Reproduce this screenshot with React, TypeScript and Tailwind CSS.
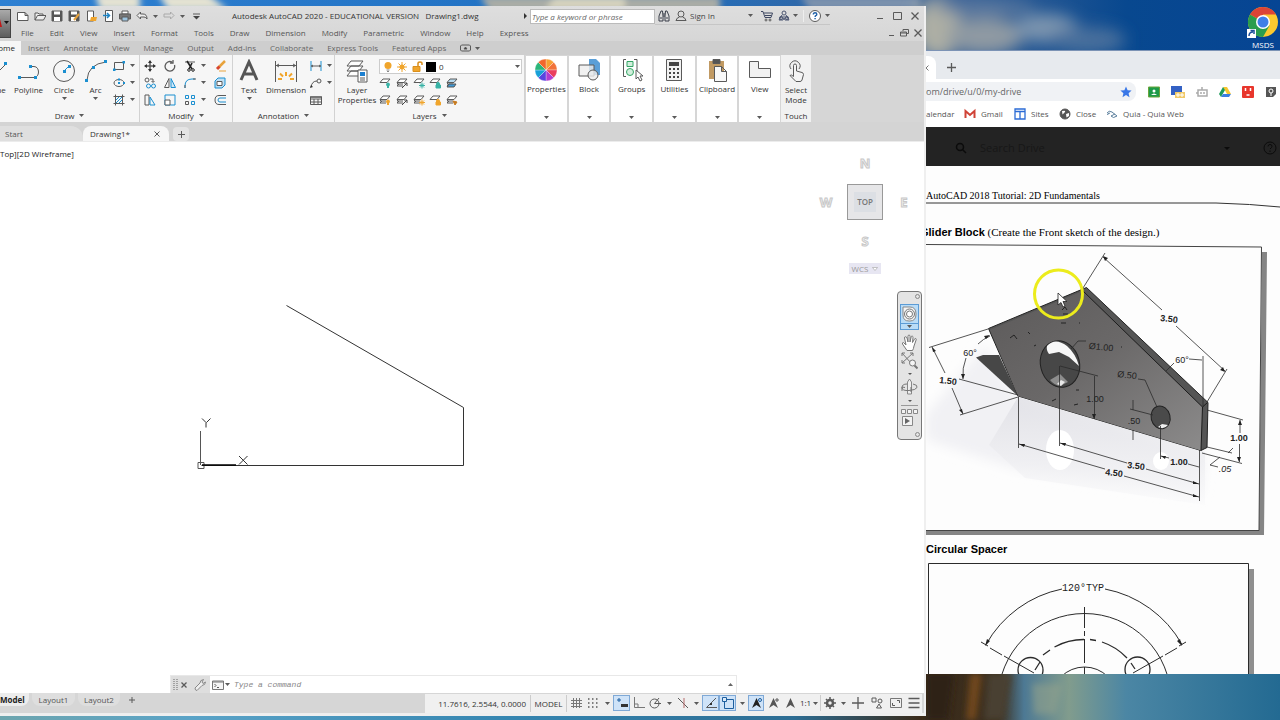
import type { ReactNode } from "react";

type IconProps = { w?: number; h?: number; children: ReactNode; className?: string };

function Icon({ w = 12, h = 12, children, className = "" }: IconProps) {
  return (
    <svg
      width={w}
      height={h}
      viewBox={`0 0 ${w} ${h}`}
      fill="none"
      stroke="#5a5a5a"
      strokeWidth="1"
      aria-hidden="true"
      className={`shrink-0 ${className}`}
    >
      {children}
    </svg>
  );
}

function Caret({ className = "" }: { className?: string }) {
  return (
    <svg width="5" height="3" viewBox="0 0 5 3" aria-hidden="true" className={`shrink-0 ${className}`}>
      <path d="M0 0h5L2.500 3z" fill="#5a5a5a" />
    </svg>
  );
}

const menus = ["File", "Edit", "View", "Insert", "Format", "Tools", "Draw", "Dimension", "Modify", "Parametric", "Window", "Help", "Express"];
const ribbonTabs = ["Insert", "Annotate", "View", "Manage", "Output", "Add-ins", "Collaborate", "Express Tools", "Featured Apps"];

function Wallpaper() {
  return (
    <svg className="absolute inset-0 h-full w-full" viewBox="0 0 1280 720" preserveAspectRatio="none" aria-hidden="true">
      <defs>
        <linearGradient id="sky" x1="0" x2="1" y1="0" y2="0">
          <stop offset="0" stopColor="#2e80d2" />
          <stop offset="0.5" stopColor="#1f6fc0" />
          <stop offset="0.74" stopColor="#3d6396" />
          <stop offset="0.88" stopColor="#08488f" />
          <stop offset="1" stopColor="#064594" />
        </linearGradient>
        <linearGradient id="sea" x1="0" x2="1" y1="0" y2="0">
          <stop offset="0" stopColor="#6da5ae" />
          <stop offset="0.15" stopColor="#5aa3c7" />
          <stop offset="0.4" stopColor="#3585b0" />
          <stop offset="0.62" stopColor="#2d6d93" />
          <stop offset="0.72" stopColor="#3a2a19" />
          <stop offset="0.78" stopColor="#3b2f1f" />
          <stop offset="0.8" stopColor="#4d7994" />
          <stop offset="0.835" stopColor="#819c8d" />
          <stop offset="0.88" stopColor="#4b86a4" />
          <stop offset="1" stopColor="#236a92" />
        </linearGradient>
        <filter id="soft" x="-20%" y="-50%" width="140%" height="200%">
          <feGaussianBlur stdDeviation="8" />
        </filter>
        <filter id="soft2" x="-20%" y="-50%" width="140%" height="200%">
          <feGaussianBlur stdDeviation="3" />
        </filter>
      </defs>
      <rect width="1280" height="360" fill="url(#sky)" />
      <g filter="url(#soft2)">
        <path d="M95 -6h45v16h-40zM158 -6h50l20 16h-60z" fill="#e4e2d2" />
        <path d="M480 -4h240v16H490z" fill="#a9aca6" />
        <path d="M555 -4h70v14h-80z" fill="#d5d2bd" />
        <path d="M800 -4h120v14h-110z" fill="#7c92ad" />
      </g>
      <g filter="url(#soft)">
        <ellipse cx="938" cy="28" rx="24" ry="30" fill="#adafa4" />
        <ellipse cx="985" cy="36" rx="38" ry="18" fill="#8f9aa3" />
        <ellipse cx="985" cy="8" rx="50" ry="7" fill="#5e7ba0" />
        <ellipse cx="1046" cy="28" rx="32" ry="14" fill="#7c94af" />
        <ellipse cx="1088" cy="40" rx="38" ry="13" fill="#4a6f9c" />
      </g>
      <rect y="660" width="1280" height="60" fill="url(#sea)" />
      <g filter="url(#soft2)">
        <path d="M926 674h28l-6 46h-22z" fill="#2e2215" />
        <path d="M970 674h12l-6 46h-10z" fill="#6f461d" />
        <path d="M988 674h24l-8 46h-20z" fill="#4a3f30" />
        <path d="M1032 684h30l-6 30h-22z" fill="#98a68b" opacity=".5" />
      </g>
    </svg>
  );
}

function QuickAccess() {
  return (
    <div className="flex items-center gap-[5px] pl-[6px]">
      <button aria-label="New"><Icon><path d="M.5 2.500h7.500l3 3v5H.5zM8 2.500v3h3" fill="#fff" /></Icon></button>
      <button aria-label="Open"><Icon><path d="M1 10V3h3l1 1h4v2M1 10l2.500-4.500H12L9.500 10z" fill="#eee" /></Icon></button>
      <button aria-label="Save"><Icon><path d="M1 1h10v10H1z" fill="#555" /><path d="M3 1.500h6v3H3zM3 7h6v4H3z" fill="#fff" stroke="none" /></Icon></button>
      <button aria-label="Save As"><Icon><path d="M1 1h10v10H1z" fill="#555" /><path d="M3 1.500h6v3H3zM3 7h5v4H3z" fill="#fff" stroke="none" /><path d="M6 10l5-6" stroke="#e8a33d" strokeWidth="2" /></Icon></button>
      <button aria-label="Open from web"><Icon><path d="M2.500 1h6v10h-6z" fill="#fff" /><path d="M6 7h6l-1 4H5z" fill="#f0a52c" stroke="none" /></Icon></button>
      <button aria-label="Save to mobile"><Icon><path d="M3.500.5h7v11h-7z" fill="#fff" /><path d="M1 5.500h6M5 3l2.500 2.500L5 8" stroke="#1d83c4" strokeWidth="1.500" /></Icon></button>
      <button aria-label="Plot"><Icon><path d="M3 1h6v3H3z" fill="#fff" /><path d="M.5 4h11v5H.5z" fill="#777" /><path d="M3 7h6v4H3z" fill="#9cc4e0" /></Icon></button>
      <button aria-label="Undo"><Icon><path d="M4.500 2L1 5.500 4.500 9V7H8q2 0 3 2 0-5-4-5H4.500z" fill="#eee" /></Icon></button>
      <Caret />
      <button aria-label="Redo"><Icon><path d="M7.500 2L11 5.500 7.500 9V7H1V4h6.500z" stroke="#aaa" /></Icon></button>
      <Caret />
      <button aria-label="Customize toolbar" className="pl-[3px]"><Icon w={7} h={7}><path d="M0 1h7" /><path d="M0 3h7L3.500 6.500z" fill="#444" stroke="none" /></Icon></button>
    </div>
  );
}

function TitleBar() {
  return (
    <header className="flex h-[35px] bg-gradient-to-b from-[#dedede] to-[#d6d6d6]">
      <button aria-label="Application menu" className="mt-[3px] flex h-[29px] w-[11px] items-center justify-end border border-l-0 border-[#444] bg-gradient-to-b from-[#aaa] to-[#5d5d5d]">
        <svg width="10" height="20" viewBox="0 0 10 20" aria-hidden="true">
          <path d="M0 5l2 8H0z" fill="#c01818" />
          <path d="M4 7h5L6.500 10z" fill="#111" />
        </svg>
      </button>
      <div className="flex min-w-0 flex-1 flex-col">
        <div className="flex h-[20px] items-center whitespace-nowrap">
          <div className="w-[221px] shrink-0"><QuickAccess /></div>
          <h1 className="w-[292px] shrink-0 whitespace-pre text-[8px] text-[#333]">Autodesk AutoCAD 2020 - EDUCATIONAL VERSION   Drawing1.dwg</h1>
          <svg width="4" height="6" viewBox="0 0 4 6" aria-hidden="true"><path d="M0 0l3 3-3 3z" fill="#333" /></svg>
          <input aria-label="Keyword search" placeholder="Type a keyword or phrase" className="ml-[2px] h-[15px] w-[125px] border border-[#bbb] bg-white px-[1px] text-[8px] italic placeholder:text-[#666]" />
          <div className="flex h-[18px] items-center border-b border-[#c6c6c6]">
            <Icon className="ml-[3px]"><path d="M1 6l2-5h1.500L5 6v5H1zM11 6L9 1H7.500L7 6v5h4zM5 4h2M5 6h2M2 8h2M8 8h2" stroke="#3a3f4a" /></Icon>
            <button className="ml-[5px] flex items-center gap-[3px] text-[8px] text-[#444]">
              <Icon><circle cx="6" cy="4" r="3" /><path d="M1 11q0-3 3.500-4M11 11q0-3-3.500-4M1 10.500h10" /></Icon>
              Sign In
            </button>
            <Caret className="ml-[33px]" />
            <Icon className="ml-2"><path d="M0 1.500h2l2 6h6l1.500-4.500H3" stroke="#3d4660" /><path d="M4 5.500h6" stroke="#3d4660" /><circle cx="5" cy="10" r="1" /><circle cx="9" cy="10" r="1" /></Icon>
            <Icon className="ml-[5px]"><g stroke="#4a5470"><circle cx="6" cy="3" r="2" /><path d="M4 5L1 10h4l1-2 1 2h4L8 5M3 7h6" /><circle cx="3" cy="8" r="1.500" /><circle cx="9" cy="8" r="1.500" /></g></Icon>
            <Caret className="ml-[3px]" />
            <span className="mx-[5px] h-3 w-px bg-[#eee]" />
            <button aria-label="Help">
              <Icon>
                <circle cx="6" cy="6" r="5.500" fill="#fff" />
                <path d="M4.300 4.600q0-1.800 1.800-1.800 1.700 0 1.700 1.500 0 .9-1 1.400-.7.400-.7 1.200M6.100 8v1.300" stroke="#1d5fa8" strokeWidth="1.400" />
              </Icon>
            </button>
            <Caret className="ml-1" />
          </div>
          <div className="ml-auto flex items-center gap-[9px] pr-[5px]">
            <button aria-label="Minimize"><Icon w={8} h={8}><path d="M1 6.500h6" /></Icon></button>
            <button aria-label="Maximize"><Icon w={9} h={8}><path d="M.5.5h8v7h-8z" /></Icon></button>
            <button aria-label="Close"><Icon w={8} h={8}><path d="M.5.5l7 7M7.500.5l-7 7" strokeWidth="1.300" /></Icon></button>
          </div>
        </div>
        <div className="flex h-[14px] items-center">
          <nav className="flex gap-4 pl-[10px] text-[8px] text-[#555]">
            {menus.map((m) => (
              <button key={m}>{m}</button>
            ))}
          </nav>
          <div className="ml-auto flex items-center gap-[5px] pr-[2px]">
            <button aria-label="Minimize drawing"><Icon w={6} h={8}><path d="M0 6.500h5" /></Icon></button>
            <button aria-label="Restore drawing"><Icon w={9} h={8}><path d="M3 2V.5h5.500v4H7M.5 3h6v4h-6zM.5 4h6" /></Icon></button>
            <button aria-label="Close drawing"><Icon w={8} h={8}><path d="M.5.5l7 7M7.500.5l-7 7" strokeWidth="1.300" /></Icon></button>
          </div>
        </div>
      </div>
    </header>
  );
}

function Panel({ title, width, caret = true, children }: { title: string; width: string; caret?: boolean; children: ReactNode }) {
  return (
    <section className={`flex shrink-0 flex-col border-r border-[#d2d2d2] bg-[#f6f6f6] ${width}`}>
      <div className="flex h-[54px] pt-[2px]">{children}</div>
      <button className="flex h-[13px] items-center justify-center gap-[5px] text-[8px] leading-[13px] text-[#333]">
        {title}
        {caret && <Caret />}
      </button>
    </section>
  );
}

function BigTool({ label, width, caret, children }: { label: string; width: string; caret?: boolean; children: ReactNode }) {
  return (
    <button className={`flex shrink-0 flex-col items-center text-[8px] leading-[10px] text-[#333] ${width}`}>
      <span className="flex h-[28px] items-center">{children}</span>
      <span className="whitespace-pre text-center">{label}</span>
      {caret && <Caret className="mt-[2px]" />}
    </button>
  );
}

function SmallTool({ label, children, caret }: { label: string; children: ReactNode; caret?: boolean }) {
  return (
    <button aria-label={label} className="flex h-[17px] items-center gap-[5px]">
      <Icon>{children}</Icon>
      {caret && <Caret />}
    </button>
  );
}

const blue = "#1b8fd0";

function DrawPanel() {
  return (
    <Panel title="Draw" width="w-[140px]">
      <div className="flex w-[9px] justify-end overflow-hidden">
        <BigTool label="Line" width="w-[22px]">
          <Icon w={22} h={24}><path d="M1 23L19 5" /><path d="M17 3h3v3h-3z" fill={blue} stroke="none" /></Icon>
        </BigTool>
      </div>
      <BigTool label="Polyline" width="w-[39px]">
        <Icon w={24} h={24}>
          <path d="M2 18.500h15c6 0 6-11 0-11h-3" /><path d="M1 17h3v3H1zM12 6h3v3h-3zM17 17h3v3h-3z" fill={blue} stroke="none" />
        </Icon>
      </BigTool>
      <BigTool label="Circle" width="w-[32px]" caret>
        <Icon w={24} h={24}>
          <circle cx="12" cy="12" r="10.500" /><path d="M12 12l5-5" stroke={blue} /><path d="M11 11h3v3h-3zM16 6h3v3h-3z" fill={blue} stroke="none" />
        </Icon>
      </BigTool>
      <BigTool label="Arc" width="w-[31px]" caret>
        <Icon w={24} h={24}>
          <path d="M3 21Q4 5 22 3" /><path d="M1 20h3v3H1zM8 7h3v3H8zM20 1h3v3h-3z" fill={blue} stroke="none" />
        </Icon>
      </BigTool>
      <div className="flex flex-col pl-[2px]">
        <SmallTool label="Rectangle" caret><path d="M1.500 2.500h9v7h-9z" /><path d="M0 8.500h2.500V11H0zM9.500 1H12v2.500H9.500z" fill={blue} stroke="none" /></SmallTool>
        <SmallTool label="Ellipse" caret><ellipse cx="6" cy="6" rx="5" ry="3.500" /><path d="M5 5h2v2H5zM5 1.500h2v2H5zM10 5h2v2h-2z" fill={blue} stroke="none" /></SmallTool>
        <SmallTool label="Hatch" caret><path d="M.5 2.500h11M.5 9.500h11M2.500.5v11M9.500.5v11" /><path d="M3 6l3-3M3 9l6-6M6 9l3-3" stroke={blue} /></SmallTool>
      </div>
    </Panel>
  );
}

function ModifyPanel() {
  return (
    <Panel title="Modify" width="w-[93px]">
      <div className="flex gap-2 pl-[4px]">
        <div>
          <SmallTool label="Move"><path d="M6 1v10M1 6h10" strokeWidth="1.500" /><path d="M4 3l2-3 2 3zM4 9l2 3 2-3zM3 4L0 6l3 2zM9 4l3 2-3 2z" fill="#333" stroke="none" /></SmallTool>
          <SmallTool label="Copy"><circle cx="3" cy="3" r="2" /><path d="M6 2h3v3M7.500 4L9 5.500 10.500 4" /><circle cx="4.500" cy="9" r="2" stroke={blue} /><circle cx="9.500" cy="9" r="2" stroke={blue} /></SmallTool>
          <SmallTool label="Stretch"><path d="M1 1h4v10H1z" /><path d="M6 3l5 8H6z" stroke={blue} /></SmallTool>
        </div>
        <div>
          <SmallTool label="Rotate"><path d="M8 2A4.800 4.800 0 1 0 10.500 5M9 0v3H6" strokeWidth="1.300" /></SmallTool>
          <SmallTool label="Mirror"><path d="M5 1.500V10.500H.5z" /><path d="M7 1.500v9h4.500z" stroke={blue} fill="#cfe7f7" /></SmallTool>
          <SmallTool label="Scale"><path d="M1 1h10v10H1z" stroke={blue} /><path d="M1 6h5v5H1z" fill="#fff" /></SmallTool>
        </div>
        <div>
          <SmallTool label="Trim" caret><path d="M1 2h10" /><path d="M3 1l5 8M8 3L5 9" strokeWidth="1.600" stroke="#222" /><circle cx="5" cy="10" r="1.300" stroke="#222" /><circle cx="9" cy="10" r="1.300" stroke="#222" /></SmallTool>
          <SmallTool label="Fillet" caret><path d="M1 11V9q0-7 7-7h3" stroke={blue} /><path d="M1 11V8M9 2h3" /></SmallTool>
          <SmallTool label="Array" caret><path d="M1.500 1.500h3v3h-3zM7.500 1.500h3v3h-3zM7.500 7.500h3v3h-3z" stroke={blue} /><path d="M1.500 7.500h3v3h-3z" /></SmallTool>
        </div>
        <div>
          <SmallTool label="Erase"><path d="M11 1L5 7" stroke="#e8a33d" strokeWidth="2.500" /><path d="M5.500 6.500L3 9" stroke="#d8452e" strokeWidth="3" /><path d="M5 11h7" stroke="#e8a33d" /></SmallTool>
          <SmallTool label="Explode"><path d="M1 4l3-3h7v7l-3 3H1z" fill="#bfe0f5" stroke={blue} /><path d="M3 4.500h5v4H3z" fill="#fff" /></SmallTool>
          <SmallTool label="Offset"><path d="M12 1.500H5q-4 0-4 4.500t4 4.500h7" /><path d="M12 4H6q-2 0-2 2t2 2h6" stroke={blue} /></SmallTool>
        </div>
      </div>
    </Panel>
  );
}

function AnnotationPanel() {
  return (
    <Panel title="Annotation" width="w-[102px]">
      <BigTool label="Text" width="w-[32px]" caret>
        <Icon w={22} h={24}><path d="M3 21L11 3l8 18M6 15h10" stroke="#555" strokeWidth="3" /></Icon>
      </BigTool>
      <BigTool label="Dimension" width="w-[42px]">
        <Icon w={24} h={24}>
          <path d="M1.500 2v21M22.500 2v21M2 6.500h20M5 5L2.500 6.500 5 8M19 5l2.500 1.500L19 8" />
          <path d="M12 13v4M6 14.500l3 3M18 14.500l-3 3M4 20h4M16 20h4" stroke="#f0a52c" strokeWidth="2" />
        </Icon>
      </BigTool>
      <div className="pl-[3px]">
        <SmallTool label="Linear" caret><path d="M1 1v10M11 1v10" stroke={blue} /><path d="M1 6h10M3 5L1.500 6 3 7M9 5l1.500 1L9 7" /></SmallTool>
        <SmallTool label="Leader" caret><path d="M1 10q1-6 6-6" /><circle cx="9" cy="4" r="2" /><path d="M0 11l1-3 2 2z" fill="#333" stroke="none" /></SmallTool>
        <SmallTool label="Table"><path d="M.5 2.500h11v8H.5zM.5 5h11M.5 8h11M4 5v6M8 5v6" /><path d="M1 2h10v2H1z" fill="#777" stroke="none" /></SmallTool>
      </div>
    </Panel>
  );
}

const layerTools = [
  ["Off", "#39b3a6"], ["Previous", "#444444"], ["Freeze", "#39b3a6"], ["Lock", "#39b3a6"], ["Match", "#3f9bd8"],
  ["On", "#f0a52c"], ["Isolate", "#444444"], ["Thaw", "#f0a52c"], ["Unlock", "#f0a52c"], ["Change", "#c77b1f"],
];

function LayersPanel() {
  return (
    <Panel title="Layers" width="w-[190px]">
      <BigTool label={"Layer\nProperties"} width="w-[44px]">
        <Icon w={24} h={24}>
          <path d="M6 2h12l-4 5H2zM6 7h12l-4 5H2zM2 17l4-5h8v5z" fill="#fff" />
          <path d="M13 11h9v12h-9z" fill="#fff" /><path d="M15 13h5v4h-5z" fill="#1b7fd0" stroke="none" /><path d="M15 19h5M15 21h5" />
        </Icon>
      </BigTool>
      <div className="flex flex-1 flex-col pr-[2px]">
        <div className="mt-[2px] flex h-[15px] items-center gap-[3px] border border-[#ccc] bg-white pl-[3px]">
          <Icon w={10}><circle cx="5" cy="4.500" r="3.500" fill="#f0a52c" stroke="none" /><path d="M3.500 9h3M4 10.500h2" stroke="#888" /></Icon>
          <Icon><circle cx="6" cy="6" r="2.500" fill="#f0a52c" stroke="none" /><path d="M6 1v10M1 6h10M2.500 2.500l7 7M9.500 2.500l-7 7" stroke="#f0a52c" /></Icon>
          <Icon><path d="M2 5.500h7v5H2z" fill="#f0a52c" stroke="#d98f1c" /><path d="M7 5V2.500q0-1.500 2-1.500t2 1.500V4" stroke="#d98f1c" strokeWidth="1.500" /></Icon>
          <span className="h-[10px] w-[10px] bg-black" />
          <select aria-label="Current layer" className="h-[13px] flex-1 appearance-none bg-white text-[8px] leading-[12px] text-[#333]">
            <option>0</option>
          </select>
          <Caret className="mr-[1px]" />
        </div>
        <div className="grid w-[84px] grid-cols-5">
          {layerTools.map(([name, color], i) => (
            <SmallTool key={name} label={`Layer ${name}`}>
              {(i === 1 || i > 3) && i !== 8 && <path d="M3 7l-2 2h6M3 5L1 7h6" />}
              <path d="M4 2h7L8 5.500H1z" fill={i === 4 ? "#b7dcf3" : "#fff"} />
              {i % 5 === 1 && <path d="M6 11l5-5M8 6h3v3" stroke={color} />}
              {i % 5 === 0 && <path d="M9 5.500a2 2 0 0 1 1 3.700V11H8V9.200a2 2 0 0 1 1-3.700z" fill={color} stroke="none" />}
              {i % 5 === 2 && <path d="M9 5.500v6M6 8.500h6M7 6.500l4 4M11 6.500l-4 4" stroke={color} />}
              {i % 5 === 3 && <path d="M7.500 8V6.500q0-1 1.500-1t1.500 1V8M7 8h4.500v3H7z" fill={color} stroke={color} />}
              {i === 4 && <path d="M3 7h7l-2 3H1z" fill={color} stroke="#555" />}
              {i === 9 && <path d="M7 7l4 1-2 3z" fill={color} stroke={color} />}
            </SmallTool>
          ))}
        </div>
      </div>
    </Panel>
  );
}

function CollapsedPanel({ label, children }: { label: string; children: ReactNode }) {
  return (
    <button className="mt-px flex h-[66px] flex-1 flex-col items-center bg-white text-[8px] leading-[10px] text-[#333]">
      <span className="flex h-[28px] items-center">{children}</span>
      <span>{label}</span>
      <Caret className="mt-auto mb-[3px]" />
    </button>
  );
}

const wheel = [
  ["M12 12V1A11 11 0 0 1 19.800 4.200z", "#f7a032"],
  ["M12 12L19.800 4.200A11 11 0 0 1 23 12z", "#f2733a"],
  ["M12 12H23A11 11 0 0 1 19.800 19.800z", "#ea3f5e"],
  ["M12 12L19.800 19.800A11 11 0 0 1 12 23z", "#b13bd0"],
  ["M12 12V23A11 11 0 0 1 4.200 19.800z", "#5a44e0"],
  ["M12 12L4.200 19.800A11 11 0 0 1 1 12z", "#18a0d8"],
  ["M12 12H1A11 11 0 0 1 4.200 4.200z", "#2cb67a"],
  ["M12 12L4.200 4.200A11 11 0 0 1 12 1z", "#f2672c"],
];

function Ribbon() {
  return (
    <div className="flex h-[67px] gap-px overflow-hidden bg-[#d6d6d6]">
      <div className="flex shrink-0">
        <DrawPanel />
        <ModifyPanel />
        <AnnotationPanel />
        <LayersPanel />
      </div>
      <div className="flex w-[254px] shrink-0 gap-[2px]">
        <CollapsedPanel label="Properties">
          <Icon w={24} h={24}>{wheel.map(([d, fill]) => <path key={fill} d={d} fill={fill} stroke="#fff" strokeWidth=".3" />)}</Icon>
        </CollapsedPanel>
        <CollapsedPanel label="Block">
          <Icon w={24} h={24}><path d="M12 1h7l4 4v12H12z" fill="#5a9fd8" stroke="none" /><path d="M2 7h15v11H2z" fill="#eee" fillOpacity=".8" /><circle cx="16" cy="17" r="5" fill="#eee" fillOpacity=".8" /></Icon>
        </CollapsedPanel>
        <CollapsedPanel label="Groups">
          <Icon w={24} h={24}><path d="M6 1.500H3.500v17H6M14 1.500h3v13" /><path d="M7 3.500h6v5H7z" fill="#d1efdc" stroke="#35a566" /><circle cx="10" cy="14" r="3.500" fill="#d1efdc" stroke="#35a566" /><path d="M16 12v9l2-2 2 4 2-1-2-4h3z" fill="#fff" /></Icon>
        </CollapsedPanel>
        <CollapsedPanel label="Utilities">
          <Icon w={18} h={24}><path d="M1.500 1.500h15v21h-15z" fill="#f1f1f1" /><path d="M4 4h10v4H4zM4 10h2v2H4zM8 10h2v2H8zM12 10h2v2h-2zM4 14h2v2H4zM8 14h2v2H8zM12 14h2v2h-2zM4 18h2v2H4zM8 18h2v2H8zM12 18h2v2h-2z" fill="#444" stroke="none" /></Icon>
        </CollapsedPanel>
        <CollapsedPanel label="Clipboard">
          <Icon w={22} h={24}><path d="M3 3h15v18H3z" fill="#c19a63" stroke="none" /><path d="M7 1.500h7v4H7z" fill="#555" /><path d="M8.500 8.500h7l5 5v10h-12zM15.500 8.500v5h5" fill="#f8f8f8" /></Icon>
        </CollapsedPanel>
        <CollapsedPanel label="View">
          <Icon w={24} h={24}><path d="M1.500 3.500h9v7h12v9h-21z" fill="#f1f1f1" /></Icon>
        </CollapsedPanel>
      </div>
      <section className="flex w-[30px] shrink-0 flex-col items-center bg-[#f1f1f1] pt-[2px] text-[8px] text-[#333]">
        <BigTool label={"Select\nMode"} width="w-[30px]">
          <Icon w={18} h={24}>
            <path d="M4 10a5 5 0 1 1 8 0" /><path d="M6.500 16V6.500q0-1.500 1.500-1.500t1.500 1.500V12l5.500 1.500q1.500.5 1.500 2L15 21q-.5 1.500-2 1.500H9L3 16.500q1-1.500 3.500 1z" fill="#f4f4f4" />
          </Icon>
        </BigTool>
        <span className="mt-auto leading-[13px]">Touch</span>
      </section>
    </div>
  );
}

function FileTabs() {
  return (
    <div className="flex h-[19px] items-end bg-[#d4d4d4] text-[8px] text-[#555]">
      <button className="h-[15px] w-[83px] rounded-tr-xl bg-[#dfdfdf] pl-[5px] text-left">Start</button>
      <div className="flex h-[15px] w-[86px] items-center justify-between rounded-t-lg bg-[#f6f6f6] pr-[9px] pl-[7px] text-[#333]">
        <button>Drawing1*</button>
        <button aria-label="Close tab"><Icon w={6} h={6}><path d="M.5.5l5 5M5.500.5l-5 5" /></Icon></button>
      </div>
      <button aria-label="New tab" className="ml-[4px] flex h-[14px] w-[16px] items-center justify-center rounded bg-[#e4e4e4]">
        <Icon w={7} h={7}><path d="M3.500 0v7M0 3.500h7" /></Icon>
      </button>
    </div>
  );
}

function ViewCube() {
  const letter = "text-center text-[13px] font-bold leading-[14px] text-[#f2f2f2] [-webkit-text-stroke:1px_#c8c8c8]";
  return (
    <div className="absolute top-[14px] right-[11px] grid grid-cols-[18px_60px_18px] grid-rows-[14px_64px_14px_26px] items-center justify-items-center">
      <span className={`col-start-2 row-start-1 ${letter}`}>N</span>
      <span className={`col-start-1 row-start-2 ${letter}`}>W</span>
      <button className="col-start-2 row-start-2 flex h-[36px] w-[36px] items-center justify-center border border-[#999] bg-[#e6e6e8] text-[8px] font-semibold text-[#777]">
        <span className="bg-[#dcdfe4] px-[3px] py-[4px]">TOP</span>
      </button>
      <span className={`col-start-3 row-start-2 ${letter}`}>E</span>
      <span className={`col-start-2 row-start-3 ${letter}`}>S</span>
      <button className="col-start-2 row-start-4 flex h-[11px] w-[32px] items-center justify-center gap-[4px] self-end bg-[#e7e6f2] text-[8px] leading-[11px] text-[#999]">
        WCS
        <svg width="6" height="4" viewBox="0 0 6 4" aria-hidden="true"><path d="M.5.5h5L3 3.500z" fill="#fff" stroke="#aaa" strokeWidth=".7" /></svg>
      </button>
    </div>
  );
}

function NavBar() {
  return (
    <div className="absolute top-[149px] right-[2px] flex h-[149px] w-[25px] flex-col items-center rounded-[4px] border border-[#777] bg-[#e4e4e4]">
      <Icon w={5} h={5} className="mt-[2px] mr-[1px] self-end"><circle cx="2.500" cy="2.500" r="2" stroke="#888" /></Icon>
      <button aria-label="Steering wheel" className="mt-[5px] flex w-[19px] flex-col items-center border border-[#5b9bd5] bg-[#b9dcf7]">
        <Icon w={17} h={18}><path d="M2 2h7q6 0 6 7t-6 7H8q-6 0-6-6z" fill="#f6f6f6" stroke="#888" /><circle cx="8.500" cy="9" r="5" stroke="#777" /><circle cx="8.500" cy="9" r="3" fill="#fff" stroke="#777" /></Icon>
        <span className="flex h-[6px] w-full items-center justify-center border-t border-[#5b9bd5]"><Caret /></span>
      </button>
      <button aria-label="Pan" className="mt-[4px]">
        <Icon w={17} h={18}><path d="M6 16.500L1.500 10q-.5-1.500 1-1.500L5 11 3.500 4q0-1.300 1-1.300T6 4l1 4V2.500Q7 1 8 1t1 1.500V8l1.200-5.200q.3-1 1-.8t.8 1.300L11.500 8.500l2-3.500q.6-1 1.300-.5t.3 1.500L13 12q-.5 3-1.500 4.500z" fill="#fff" stroke="#777" /></Icon>
      </button>
      <button aria-label="Zoom" className="flex flex-col items-center gap-[3px]">
        <Icon w={17} h={18}><path d="M1 1l9 10M1 11L12 1M1 4V1h3M9 1h3v3M1 8v3h3" stroke="#777" /><circle cx="11.500" cy="11" r="3" fill="#f5f5f5" stroke="#777" /><path d="M13.500 13.500l3 3" stroke="#777" strokeWidth="2" /></Icon>
        <svg width="4" height="2" viewBox="0 0 4 2" aria-hidden="true"><path d="M0 0h4L2 2z" fill="#555" /></svg>
      </button>
      <button aria-label="Orbit" className="mt-[3px] flex flex-col items-center gap-[4px]">
        <Icon w={17} h={18}><path d="M6.500 16V4L8.500 1l2 3v12z" fill="#eee" stroke="#888" /><path d="M12 6q5 1 4 3.500T8 12.500 1 9.500 6 6M4 9.500L1 9v4M10 9v5" stroke="#777" /></Icon>
        <svg width="4" height="2" viewBox="0 0 4 2" aria-hidden="true"><path d="M0 0h4L2 2z" fill="#555" /></svg>
      </button>
      <button aria-label="Show motion" className="mt-[3px] border-t border-[#999] pt-[3px]">
        <Icon w={17} h={18}><path d="M.5.500h4v4h-4zM6.500.5h4v4h-4zM12.500.5h4v4h-4zM1.500 7.500h10v9h-10z" fill="#f3f3f3" stroke="#888" /><path d="M4 9l5 3-5 3z" fill="#666" stroke="none" /></Icon>
      </button>
      <Icon w={5} h={5} className="mt-auto mr-[1px] mb-[2px] self-end"><circle cx="2.500" cy="2.500" r="2" stroke="#888" /></Icon>
    </div>
  );
}

function ModelSpace() {
  return (
    <main className="relative min-h-0 flex-1 overflow-hidden border-t border-[#ececec] bg-white">
      <p className="pt-[6px] text-[8px] leading-[12px] text-[#222]">Top][2D Wireframe]</p>
      {/* drawing, in model space coordinates of the viewport */}
      <svg className="absolute top-0 left-0" width="500" height="340" viewBox="0 141 500 340" fill="none" stroke="#333" aria-label="Drawing1">
        <path d="M286.500 304.500L463.500 406.500V464.500H201.500" />
        <path d="M200.500 430v34M198 461.500h6v6h-6z" stroke="#555" />
        <path d="M202 464h34" stroke="#000" strokeWidth="1.500" />
        <path d="M202 417.500l4 4v5M210.500 417.500l-4 4M239 455l8.500 8.500M247.500 455l-8.500 8.500" />
      </svg>
      <ViewCube />
      <NavBar />
      <form className="absolute bottom-0 left-[170px] flex h-[18px] w-[567px] items-center border border-b-0 border-[#e8e8e8] bg-white" onSubmit={(e) => e.preventDefault()}>
        <div className="flex h-full w-[39px] items-center bg-[#dedede] pl-[2px]">
          <Icon w={5} h={12}><path d="M1 0v12M4 0v12" stroke="#666" strokeDasharray="1 1" /></Icon>
          <button aria-label="Close command line" className="ml-[3px]"><Icon w={6} h={6}><path d="M.5.5l5 5M5.500.5l-5 5" strokeWidth="1.300" /></Icon></button>
          <button aria-label="Customize" className="ml-[7px]"><Icon><path d="M1 9l5-5q0-3 3.500-3.500L8 3l1 1.500L11.500 3Q11.500 6 8 6.500L3 11.500q-2 0-2-2.500z" stroke="#888" fill="#eee" /></Icon></button>
        </div>
        <Icon className="ml-[2px]"><path d="M.5 2h11v8.500H.5z" fill="#f5f5f5" stroke="#777" /><path d="M.5 3h11" stroke="#777" /><path d="M2.500 5l1.500 1.500L2.500 8M5 8.500h2" /></Icon>
        <Caret className="ml-[1px]" />
        <input aria-label="Command" placeholder="Type a command" className="ml-[4px] flex-1 font-['Liberation_Mono',monospace] text-[8px] italic outline-none placeholder:text-[#888]" />
        <svg width="5" height="3" viewBox="0 0 5 3" aria-hidden="true" className="mr-[3px]"><path d="M0 3h5L2.500 0z" fill="#666" /></svg>
      </form>
    </main>
  );
}

function StatusCell({ label, width, active, children }: { label: string; width: string; active?: boolean; children: ReactNode }) {
  return (
    <button aria-label={label} className={`flex h-[16px] items-center justify-center ${width} ${active ? "border border-[#7fa9d6] bg-[#cfe3f8]" : ""}`}>
      {children}
    </button>
  );
}

function StatusBar() {
  const man = "M6.500 1L2 11l4.500-3L11 11z";
  return (
    <footer className="flex h-[21px] shrink-0 border-b border-[#eee] bg-[#d6d6d6] pr-[2px] text-[8px] text-[#555]">
      <nav className="flex h-[13px] items-center">
        <button className="h-full w-[29px] rounded-br-lg bg-[#ececec] text-left font-bold text-[#222]">Model</button>
        <button className="ml-[3px] h-full w-[43px] rounded-b-lg bg-[#dedede]">Layout1</button>
        <button className="ml-[3px] h-full w-[42px] rounded-b-lg bg-[#dedede]">Layout2</button>
        <button aria-label="New layout" className="flex h-full w-[24px] items-center justify-center"><Icon w={6} h={6}><path d="M3 0v6M0 3h6" /></Icon></button>
      </nav>
      <div className="ml-auto flex h-[19px] items-center self-center bg-[#f0f0f0] text-[#333]">
        <span className="h-[17px] w-[106px] border-r border-[#ccc] pr-[4px] text-right leading-[17px] whitespace-nowrap">11.7616, 2.5544, 0.0000</span>
        <button className="h-[17px] w-[36px] border-r border-[#ccc] leading-[17px]">MODEL</button>
        <StatusCell label="Grid" width="w-[17px]"><Icon><path d="M3.500 1v10M6.500 1v10M9.500 1v10M1 3.500h11M1 6.500h11M1 9.500h11" stroke="#777" /></Icon></StatusCell>
        <StatusCell label="Snap" width="w-[17px]"><Icon><path d="M1 2h10M1 6h10M1 10h10" strokeWidth="1.500" strokeDasharray="1.500 2.500" /></Icon></StatusCell>
        <StatusCell label="Snap settings" width="w-[12px]"><Caret /></StatusCell>
        <StatusCell label="Dynamic input" width="w-[17px]" active><Icon><path d="M1 3h4M3 1v4" stroke="#1d5f9f" /><path d="M5 7h7v3H5z" fill="#333" stroke="none" /></Icon></StatusCell>
        <StatusCell label="Ortho" width="w-[17px]"><Icon><path d="M1.500 0v10.500H12M1.500 7H5v3" stroke="#777" /></Icon></StatusCell>
        <StatusCell label="Polar" width="w-[16px]"><Icon><circle cx="5.500" cy="6.500" r="4.500" /><path d="M5.500 6.500H12M5.500 6.500L10 1" /></Icon></StatusCell>
        <StatusCell label="Polar settings" width="w-[12px]"><Caret /></StatusCell>
        <StatusCell label="Isodraft" width="w-[15px]"><Icon><path d="M1 1l10 10" /><path d="M7 1v10" stroke="#b56a6a" /></Icon></StatusCell>
        <StatusCell label="Isodraft settings" width="w-[12px]"><Caret /></StatusCell>
        <StatusCell label="Object snap tracking" width="w-[17px]" active><Icon><path d="M11 1L1.500 10.500H12" /><path d="M5 6h2v2H5z" fill="#333" stroke="none" /></Icon></StatusCell>
        <StatusCell label="Object snap" width="w-[17px]" active><Icon><path d="M2.500 2.500h9v9h-9z" stroke="#1d5f9f" /><path d="M.5.5h4v4h-4z" fill="#dceaf8" stroke="#1d5f9f" /></Icon></StatusCell>
        <StatusCell label="Snap modes" width="w-[12px]"><Caret /></StatusCell>
        <StatusCell label="Annotation visibility" width="w-[16px]" active><Icon><path d={man} fill="#222" stroke="none" /><circle cx="10" cy="3" r="1.500" stroke="#1d5f9f" /></Icon></StatusCell>
        <StatusCell label="Auto scale" width="w-[17px]"><Icon><path d={man} fill="#555" stroke="none" /><path d="M10 1v4M8 3h4" /></Icon></StatusCell>
        <StatusCell label="Annotation" width="w-[17px]"><Icon><path d={man} fill="#555" stroke="none" /></Icon></StatusCell>
        <button className="flex h-[16px] w-[23px] items-center justify-center gap-[2px] border-r border-[#ccc]">1:1<Caret /></button>
        <StatusCell label="Workspace" width="w-[17px]"><Icon><circle cx="6" cy="6" r="3" strokeWidth="2.500" /><path d="M6 0v3M6 9v3M0 6h3M9 6h3M2 2l2 2M8 8l2 2M10 2L8 4M4 8l-2 2" strokeWidth="1.500" /></Icon></StatusCell>
        <StatusCell label="Workspace list" width="w-[11px]"><Caret /></StatusCell>
        <StatusCell label="Annotation monitor" width="w-[18px]"><Icon><path d="M6 0v12M0 6h12" strokeWidth="1.300" /></Icon></StatusCell>
        <StatusCell label="Isolate objects" width="w-[19px]"><Icon><path d="M1 1h4v4H1zM5.500 11L8 7l2.500 4z" /><circle cx="9" cy="4" r="2" /></Icon></StatusCell>
        <StatusCell label="Clean screen" width="w-[19px]"><Icon><path d="M.5 1.500h11v9H.5z" stroke="#777" /><path d="M7 3.500h2.500V6M5 8.500H2.500V6" /></Icon></StatusCell>
        <StatusCell label="Customize status" width="w-[17px]"><Icon><path d="M.5 1.500h11M.5 6h11M.5 10.500h11" strokeWidth="1.300" /></Icon></StatusCell>
      </div>
    </footer>
  );
}

function AutoCadWindow() {
  return (
    <div className="relative mt-[6px] mb-1 flex min-w-0 flex-col overflow-hidden border-r-2 border-b-2 border-[#efefef] bg-white">
      <TitleBar />
      <div className="flex h-[14px] items-center gap-[14px] bg-[#cecece] text-[8px] whitespace-nowrap text-[#666]">
        <button className="flex h-full w-[21px] justify-end overflow-hidden bg-[#f6f6f6] pr-[6px] leading-[14px] text-[#222]">Home</button>
        <div className="-ml-[7px] flex gap-[14px]">
          {ribbonTabs.map((t) => (
            <button key={t}>{t}</button>
          ))}
        </div>
        <button aria-label="Ribbon state" className="flex items-center gap-[4px]">
          <Icon w={11} h={8}><path d="M1.500 1h8l1 1v4l-1 1h-8l-1-1V2z" /><path d="M4 5l1.500-2L7 5z" fill="#333" /></Icon>
          <Caret />
        </button>
      </div>
      <Ribbon />
      <FileTabs />
      <ModelSpace />
      <StatusBar />
    </div>
  );
}

const extensionIcons = (
  <div className="flex items-center gap-[11px] pl-3">
    <Icon><path d="M.5 1h11v10H.5z" fill="#1d9a48" stroke="#6ba53b" /><circle cx="6" cy="5" r="1.500" fill="#fff" stroke="none" /><path d="M3 9q3-3 6 0z" fill="#fff" stroke="none" /></Icon>
    <Icon w={14} h={14}><path d="M0 1h11v9H0z" fill="#3361c4" stroke="none" /><path d="M4 7h10v6H4z" fill="#f0c96a" stroke="none" /><path d="M6 9h2v2H6zM10 9h2v2h-2z" stroke="#fff" /></Icon>
    <Icon><path d="M2 4h9v6H2zM6 1v3M0 7h2M5 6v2M8 6v2" stroke="#aaa" strokeWidth="1.500" /></Icon>
    <Icon><path d="M4 1h4l4 7H8z" fill="#f7c62f" stroke="none" /><path d="M4 1L0 8l2 3 4-7z" fill="#1d9a5b" stroke="none" /><path d="M4 8h8l-2 3H2z" fill="#3a7de0" stroke="none" /></Icon>
    <Icon><rect width="12" height="12" rx="1" fill="#e8362c" stroke="none" /><path d="M3.500 2v3M8.500 2v3M4.500 9h3" stroke="#fff" strokeWidth="1.500" /></Icon>
    <Icon><path d="M1 1h10v7l-3 3H1z" fill="#555" stroke="none" /><circle cx="6" cy="5" r="2" stroke="#fff" /><path d="M6 7v3" stroke="#fff" /></Icon>
  </div>
);

function SliderBlock() {
  return (
    <svg width="354" height="300" viewBox="926 240 354 300" className="shrink-0" aria-label="Slider block drawing">
      <defs>
        <linearGradient id="face" x1="0" y1="0" x2="1" y2="1">
          <stop offset="0" stopColor="#5c5a5a" />
          <stop offset=".45" stopColor="#6a6868" />
          <stop offset="1" stopColor="#8c8b8b" />
        </linearGradient>
        <linearGradient id="haze" x1="0" y1="0" x2="0" y2="1">
          <stop offset="0" stopColor="#dcdce2" />
          <stop offset="1" stopColor="#fafafb" />
        </linearGradient>
        <filter id="fuzz"><feGaussianBlur stdDeviation="6" /></filter>
      </defs>
      <path d="M926 245L1262 247L1259 530H926z" fill="#fdfdfd" />
      <path d="M926 415L985 345L1018 400L1205 455L1200 495L1020 470L926 440z" fill="#f1f1f4" filter="url(#fuzz)" />
      <path d="M1018 397L989 445L1025 478L1205 505V452z" fill="url(#haze)" opacity=".7" />
      <ellipse cx="1060" cy="450" rx="14" ry="20" fill="#fff" />
      <ellipse cx="1161" cy="461" rx="8" ry="9" fill="#fff" />
      <path d="M1262 252h5L1264 535H926v-5h333z" fill="#858585" />
      <path d="M926 244.500L1261.500 247L1259 530.500H926" fill="none" stroke="#444" />

      <path d="M976 357.500L983 355h16l19 41z" fill="#474747" />
      <path d="M988.500 328.500L1086.500 287.500L1208 402.500L1207 447.500L1201 450.500L1018 396z" fill="#555" stroke="#222" />
      <path d="M990 330L1083 291L1202.500 407L1201 450.500L1018 396z" fill="url(#face)" />
      <path d="M1083 291L1202.500 407L1201 450.500M1202.500 407l5-4.500" fill="none" stroke="#1c1c1c" />
      <ellipse cx="1060" cy="364" rx="19.500" ry="23.500" fill="#474747" stroke="#222" transform="rotate(-14 1060 364)" />
      <path d="M1047 346q8-9 20 0 9 8 12 20l-10-9-10-5-10 2q-3-4-2-8z" fill="#f7f7f7" />
      <path d="M1050 380l10-6 8 8-8 4q-6-1-10-6z" fill="#8d8d8d" />
      <path d="M1057 384l4-4 4 2-4 4z" fill="#e8e8e8" />
      <ellipse cx="1160.500" cy="417.500" rx="9.500" ry="11.500" fill="#4a4a4a" stroke="#222" transform="rotate(-14 1160 417)" />
      <path d="M1158 427l4-3 6 1q-4 5-10 2z" fill="#eee" />

      <g fill="none" stroke="#2b2b2b" strokeWidth=".8">
        <path d="M1083 288L1105 253M1103 257L1162 310M1176 326L1225 371M1207 402L1227 369" />
        <path d="M988 329L929 347.500M932 347L945 373M952 388L963 414M1018 397L960 415M1018 395L959 379" />
        <path d="M990 336q-7 3-12 8M966 358q-4 10-3 21M1189 359l13 1M1203 356v51M1174 363l-8 8" />
        <path d="M1086 341h-8l-7 8M1138 379l7 1 12 27M1060 366l38 10M1094.500 376v43" />
        <path d="M1133 400v10M1130 409l23 6M1133 430v10" />
        <path d="M1018.500 397v51M1019 444l86 25M1124 476l75 21M1059.500 366v80M1060 443l67 20M1146 469l53 15" />
        <path d="M1160.500 426v33M1161 456l8 2M1188 464l11 3M1199.500 450v51" />
        <path d="M1207 410l36 10M1240 420v13M1239.500 444v18M1202 453l40 10.500M1207 447l25 6M1228 453l5-5M1220 457l-10 8 8 2" />
      </g>
      <path d="M1103 256l5 2-3 3zM1225 372l-5-2 3-3zM932 347l4 4-3 1zM963 414l-4-4 3-1zM963 379l-2-5h4zM990 335l-6 1 2 3zM1199 497l-6-3v3zM1199 484l-6-3v3zM1019 444l6 0-1 3zM1060 443l6 0-1 3zM1161 456l5 0-1 3zM1240 420l-2 5h4zM1239 462l-2-5h4zM1094 419l-2-5h4z" fill="#222" />
      <g fontFamily="Liberation Sans, sans-serif" fontSize="9" fill="#222" textAnchor="middle">
        <text x="1169" y="322" fontWeight="bold" transform="rotate(6 1169 319)">3.50</text>
        <text x="948" y="384" fontWeight="bold" transform="rotate(6 948 381)">1.50</text>
        <text x="970" y="356">60°</text>
        <text x="1182" y="363">60°</text>
        <text x="1101" y="350" transform="rotate(6 1101 347)">Ø1.00</text>
        <text x="1127" y="378" transform="rotate(6 1127 375)">Ø.50</text>
        <text x="1095" y="402">1.00</text>
        <text x="1134" y="424">.50</text>
        <text x="1114" y="476" fontWeight="bold" transform="rotate(6 1114 473)">4.50</text>
        <text x="1136" y="469" fontWeight="bold" transform="rotate(6 1136 466)">3.50</text>
        <text x="1179" y="465" fontWeight="bold">1.00</text>
        <text x="1239" y="441" fontWeight="bold">1.00</text>
        <text x="1225" y="472" fontStyle="italic">.05</text>
      </g>
      <path d="M1062 310l3-3 2 3M1063 314h5M1061 323h5M1079 323h1M1010 338l4-3 3 4M1028 332l2 2M1034 346l2-1M1052 401l4-2M1074 405l4-1M1076 390h3M1121 347h1" stroke="#222" fill="none" />

      <circle cx="1058.500" cy="294" r="24" fill="none" stroke="#ecec1c" strokeWidth="3" />
      <path d="M1058 293v12l3-2.500 2 4.500 2-1-2-4.500h4z" fill="#fff" stroke="#222" strokeWidth=".8" />
    </svg>
  );
}

function CircularSpacer() {
  return (
    <svg width="354" height="116" viewBox="926 558 354 116" className="shrink-0" fill="none" stroke="#2b2b2b" aria-label="Circular spacer drawing">
      <path d="M1249 569h5v110h-5z" fill="#8f8f8f" stroke="none" />
      <path d="M928.500 680V563.500H1248.500V680" />
      <circle cx="1084.500" cy="700" r="86.500" />
      <circle cx="1084.500" cy="700" r="33" />
      {/* bolt circle centre line */}
      <path d="M1043 655l7-5M1054.500 647A61 61 0 0 1 1084 639.500M1090 639.500l6 1M1102 642a61 61 0 0 1 25 16M1131 663l4 6M1035 670l5-8" strokeWidth="1.300" />
      <path d="M986 644.500A113 113 0 0 1 1062 589M1105 589a113 113 0 0 1 77 55.500" />
      <path d="M1084.500 607v21M1084.500 631v5M1084.500 639v24M1084.500 667v7" />
      <path d="M981 642l7 4M990 648l12 7M1004 656l30 17M1186 642l-7 4M1177 648l-12 7M1163 656l-30 17" />
      <circle cx="1030.500" cy="670" r="12.500" strokeWidth="1.300" />
      <circle cx="1137.500" cy="669.500" r="12.500" strokeWidth="1.300" />
      <path d="M985 646l2-7 3 2zM1182 646l-2-7-3 2z" fill="#222" stroke="none" />
      <text x="1083" y="591" fontFamily="Liberation Mono, monospace" fontSize="10" textAnchor="middle" fill="#222" stroke="none">120°TYP</text>
    </svg>
  );
}

function BrowserWindow() {
  return (
    <div className="flex min-h-0 flex-1 flex-col overflow-hidden border-t border-[#7c93b5] bg-white">
      <div className="flex h-[28px] shrink-0 items-end bg-[#e7eaee]">
        <div className="flex h-[23px] w-[10px] items-center rounded-tr-lg bg-white">
          <Icon w={3} h={6}><path d="M0 3l2.500-2.500M0 3l2.500 2.500" stroke="#777" /></Icon>
        </div>
        <button aria-label="New tab" className="ml-[11px] flex h-[23px] items-center"><Icon w={9} h={9}><path d="M4.500 0v9M0 4.500h9" strokeWidth="1.300" /></Icon></button>
      </div>
      <div className="flex h-[25px] shrink-0 items-center">
        <div className="flex h-[19px] w-[210px] items-center justify-between rounded-r-lg bg-[#f0f2f5] pr-[4px]">
          <input aria-label="Address" defaultValue="om/drive/u/0/my-drive" className="w-[140px] bg-transparent text-[9px] text-[#666] outline-none" />
          <button aria-label="Bookmark"><Icon><path d="M6 .5l1.600 3.700 4 .4-3 2.600.9 4L6 9.100l-3.500 2.100.9-4-3-2.600 4-.4z" fill="#3a78e7" stroke="none" /></Icon></button>
        </div>
        {extensionIcons}
      </div>
      <nav className="flex h-[23px] shrink-0 items-center pb-[3px] text-[8px] whitespace-nowrap text-[#555]">
        <a href="#" className="w-[38px]">alendar</a>
        <a href="#" className="flex w-[50px] items-center gap-[5px]"><Icon><path d="M1.500 10V3L6 7l4.500-4v7" stroke="#d04337" strokeWidth="2" /></Icon>Gmail</a>
        <a href="#" className="flex w-[45px] items-center gap-[5px]"><Icon><path d="M1 1h10v10H1zM1 3.500h10M6 4v7" stroke="#2c6cd6" strokeWidth="1.300" /></Icon>Sites</a>
        <a href="#" className="flex w-[47px] items-center gap-[5px]"><Icon><circle cx="6" cy="6" r="5" fill="#555" /><path d="M3 3q4-1 3 1L3.500 6.500zM7 6l3-1v3L7.500 9.500z" fill="#fff" stroke="none" /></Icon>Close</a>
        <a href="#" className="flex items-center gap-[5px]"><Icon><path d="M1 5q2-3 5-1l5 4q-4 3-6 0l4-2M2 7q-2-1 2-2" stroke="#5b7f9d" /></Icon>Quia - Quia Web</a>
      </nav>
      <div className="flex h-[39px] shrink-0 items-center bg-[#232323] pt-[3px] pl-[29px]">
        <Icon><circle cx="5" cy="5" r="3.500" stroke="#0b0b0b" strokeWidth="1.500" /><path d="M7.500 7.500L11 11" stroke="#0b0b0b" strokeWidth="1.500" /></Icon>
        <input aria-label="Search Drive" placeholder="Search Drive" className="ml-[13px] min-w-0 flex-1 bg-transparent text-[11px] placeholder:text-[#171717]" />
        <svg width="6" height="3" viewBox="0 0 6 3" aria-hidden="true"><path d="M0 0h6L3 3z" fill="#0b0b0b" /></svg>
        <Icon w={14} h={14} className="mr-[3px] ml-[33px]"><circle cx="7" cy="7" r="6" stroke="#0b0b0b" /><path d="M5 5.500q0-2 2-2t2 1.700Q9 6.500 7 8M7 9.500v1.500" stroke="#0b0b0b" /></Icon>
      </div>
      <article className="flex min-h-0 flex-1 flex-col overflow-hidden bg-[#fdfdfd] text-black">
        <p className="mt-6 shrink-0 font-['Liberation_Serif',serif] text-[10px] leading-[12px]">AutoCAD 2018 Tutorial: 2D Fundamentals</p>
        <svg width="354" height="8" viewBox="0 0 354 8" className="shrink-0" aria-hidden="true"><path d="M0 1H290Q325 2 354 5" fill="none" stroke="#333" /></svg>
        <h2 className="mt-[15px] -ml-[6px] shrink-0 font-['Liberation_Serif',serif] text-[11px] leading-[15px] font-normal whitespace-nowrap">
          <b className="font-['Liberation_Sans',sans-serif]">Glider Block</b> (Create the Front sketch of the design.)
        </h2>
        <SliderBlock />
        <h2 className="mt-[2px] mb-[2px] shrink-0 font-['Liberation_Sans',sans-serif] text-[11px] leading-[14px] font-bold">Circular Spacer</h2>
        <CircularSpacer />
      </article>
    </div>
  );
}

export default function App() {
  return (
    <div className="relative h-screen overflow-hidden font-['Open_Sans','Noto_Sans',sans-serif]">
      <Wallpaper />
      <div className="relative grid h-full grid-cols-[minmax(0,926fr)_minmax(0,354fr)] grid-rows-[minmax(0,1fr)]">
        <AutoCadWindow />
        <div className="flex min-h-0 min-w-0 flex-col pb-[46px]">
          <div className="flex h-[50px] shrink-0 justify-end pt-[6px]">
            <a href="#" className="flex w-[34px] flex-col items-center text-[8px] leading-[14px] text-white">
              <svg width="32" height="32" viewBox="0 0 32 32" aria-hidden="true" className="shrink-0">
                <circle cx="16" cy="16" r="15" fill="#fbc92f" />
                <path d="M16 16L3 8.500A15 15 0 0 1 29 8.500H16z" fill="#dc4436" />
                <path d="M3 8.500A15 15 0 0 0 16 31l6.500-11.500L16 16z" fill="#2a9d4e" />
                <circle cx="16" cy="16" r="7" fill="#fff" />
                <circle cx="16" cy="16" r="5.500" fill="#3f7fe8" />
                <path d="M0 23h9v9H0z" fill="#fff" />
                <path d="M2 30q0-4 4-4M3.500 24.500H7V28" fill="none" stroke="#1d4f9a" strokeWidth="1.500" />
              </svg>
              MSDS
            </a>
          </div>
          <BrowserWindow />
        </div>
      </div>
    </div>
  );
}
